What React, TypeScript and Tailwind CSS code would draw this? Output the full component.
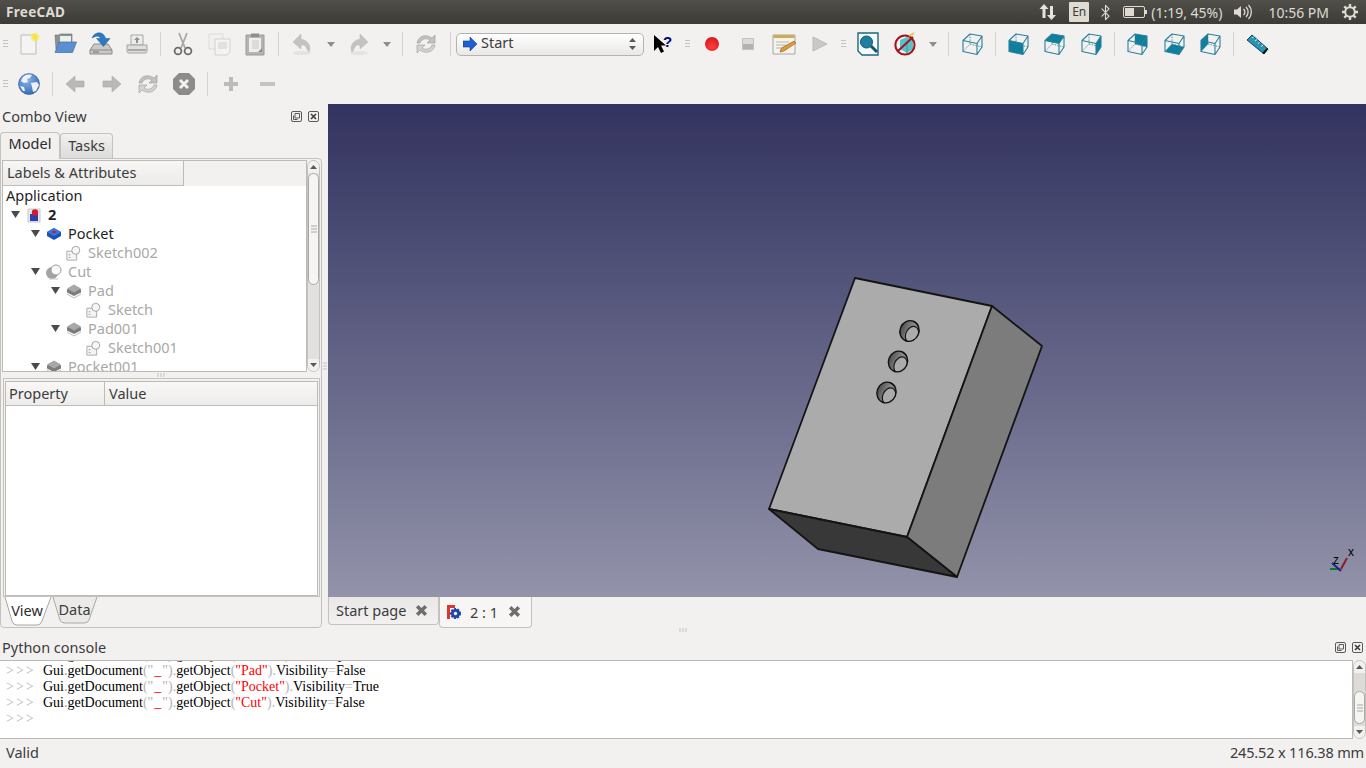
import React from "react";
import { Bluetooth } from "lucide-react";

const I = ({ children, s = 24 }: { children: React.ReactNode; s?: number }) => (
  <svg width={s} height={s} viewBox="0 0 24 24" className="block">{children}</svg>
);

const Grip = ({ w = "w-[11px]" }: { w?: string }) => (
  <div className={`${w} h-full flex items-center justify-start`}>
    <svg width="6" height="10" viewBox="0 0 6 10" className="ml-[3px] block">
      <path d="M0 1.500h5M0 4.500h5M0 7.500h5" stroke="#c4c2bf" strokeWidth="1" />
    </svg>
  </div>
);
const Sep = ({ w = "w-[10px]" }: { w?: string }) => (
  <div className={`${w} h-full flex items-center justify-center`}><div className="w-px h-6 bg-[#d6d4d1]" /></div>
);
const Btn = ({ children, w = "w-9" }: { children?: React.ReactNode; w?: string }) => (
  <div className={`${w} h-full flex items-center justify-center shrink-0`}>{children}</div>
);
const Drop = () => (
  <svg width="8" height="5" viewBox="0 0 8 5" className="block"><path d="M0 0h8L4 5z" fill="#8f8e8c" /></svg>
);

const NewDoc = () => (
  <I>
    <path d="M4 3h15v19H4z" fill="#f4f4f2" stroke="#bdbcb9" />
    <circle cx="18" cy="5" r="4.500" fill="#f5e85a" opacity=".55" />
    <circle cx="18" cy="5" r="2.600" fill="#f9e52b" />
  </I>
);
const Open = () => (
  <I>
    <path d="M2 3h4l1-1h12v9H5L3 17z" fill="#8d9094" stroke="#6b7076" strokeWidth=".6" />
    <path d="M7 4h11v6H7z" fill="#eeeeeb" />
    <path d="M6 10H23.500L19.500 20.500H2z" fill="#5b8fd0" stroke="#3f6ba6" strokeWidth=".7" />
  </I>
);
const Save = () => (
  <I>
    <path d="M5 12h14l4 6v4H1v-4z" fill="#c9c9c5" stroke="#8b8b88" />
    <path d="M1 18h22" stroke="#8b8b88" />
    <path d="M4 20h6" stroke="#6e6e6c" />
    <path d="M3 6C5 1 10 0 13 1.500c2 1 3 3 3.500 5H21l-6.500 8-7-8h4C11 4 8 3 3 6z" fill="#2f79c3" stroke="#1f5a99" strokeWidth=".5" />
  </I>
);
const Print = () => (
  <I>
    <path d="M6 3h12v10H6z" fill="#ececea" stroke="#a9a8a5" />
    <path d="M12 5l3 3h-2v3h-2V8H9z" fill="#8f8f8d" />
    <path d="M2 13h20v6q0 2-2 2H4q-2 0-2-2z" fill="#dededb" stroke="#a3a29f" />
    <path d="M3 18h18" stroke="#9a9996" strokeWidth="1.500" />
  </I>
);
const Cut = () => (
  <I>
    <path d="M8 1l6 15M16 1L10 16" stroke="#a9a8a6" strokeWidth="1.800" />
    <circle cx="7" cy="19" r="3.400" fill="none" stroke="#6d6d6b" strokeWidth="1.800" />
    <circle cx="17" cy="19" r="3.400" fill="none" stroke="#6d6d6b" strokeWidth="1.800" />
  </I>
);
const Copy = () => (
  <I>
    <path d="M2 2h14v15H2z" fill="#f1f0ee" stroke="#dcdbd8" />
    <path d="M8 7h15v13l-3 3H8z" fill="#f4f3f1" stroke="#d2d1ce" />
    <path d="M11 10h9v7h-9z" fill="#e2e1de" />
  </I>
);
const Paste = () => (
  <I>
    <path d="M3 3h18v20H3z" fill="#b5b4b1" stroke="#9b9a97" />
    <path d="M6 6h12v14H6z" fill="#efeeec" />
    <path d="M9 8h7v9H9z" fill="#dcdbd8" />
    <path d="M8 1.500h8V5H8z" fill="#8f8e8c" />
    <path d="M15 20l4-4v4z" fill="#8f8e8c" />
  </I>
);
const Undo = ({ flip = false }: { flip?: boolean }) => (
  <I>
    <g transform={flip ? "matrix(-1 0 0 1 24 0)" : undefined}>
      <ellipse cx="12" cy="21" rx="9" ry="2" fill="#e4e3e0" />
      <path d="M11 2L3 10l8 7v-4c3-.5 5 .5 6 4 .3 1 1 2 2 3 2-4 1-11-8-13z" fill="#c4c3c0" stroke="#b5b4b1" strokeWidth=".5" />
    </g>
  </I>
);
const Refresh = () => (
  <I>
    <path d="M3 11C4 6 8 3 13 4c2 0 3 1 5 2l3-3v8h-8l3-3c-3-2-8-2-10 3z" fill="#c2c1be" stroke="#a3a29f" strokeWidth=".7" />
    <path d="M21 13c-1 5-5 8-10 7-2 0-3-1-5-2l-3 3v-8h8l-3 3c3 2 8 2 10-3z" fill="#d4d3d0" stroke="#a3a29f" strokeWidth=".7" />
  </I>
);
const Globe = () => (
  <I>
    <defs>
      <radialGradient id="gl" cx=".4" cy=".3" r=".8"><stop offset="0" stopColor="#8fb6e6" /><stop offset="1" stopColor="#2a62b0" /></radialGradient>
    </defs>
    <circle cx="12" cy="12" r="10.500" fill="url(#gl)" stroke="#2b5b9e" strokeWidth=".6" />
    <path d="M6 5c3-3 7-3 9-2l-2 3-3 1 1 3-4 1-3-2zM14 11l6-1 2 3-3 6-3 1-1-5zM3 14l4 1 1 4-2 0z" fill="#eef2f8" />
  </I>
);
const Arrow = ({ flip = false }: { flip?: boolean }) => (
  <I>
    <path d={flip ? "M3 9h9V4l9 8-9 8v-5H3z" : "M20 9h-9V4l-9 8 9 8v-5h9z"} fill="#b9b8b5" stroke="#a9a8a5" strokeWidth=".6" />
  </I>
);
const StopX = () => (
  <I>
    <path d="M7 1h10l6 6v10l-6 6H7l-6-6V7z" fill="#8d8c8a" />
    <path d="M8 8l8 8M16 8l-8 8" stroke="#f2f1f0" strokeWidth="3" />
  </I>
);
const Plus = () => (
  <I>
    <path d="M10 5h4v5h5v4h-5v5h-4v-5H5v-4h5z" fill="#bcbbb8" />
  </I>
);
const Minus = () => (
  <I>
    <path d="M5 10h15v4H5z" fill="#c4c3c0" />
  </I>
);
const WhatsThis = () => (
  <svg width="20" height="20" viewBox="0 0 20 20" className="block">
    <path d="M1 1v16l4-4 3 6 3-1.500-3-6h5z" fill="#000" />
    <text x="10" y="13" fontSize="15" fontWeight="700" fill="#00007f" fontFamily="'Liberation Sans',sans-serif">?</text>
  </svg>
);
const Record = () => (
  <I>
    <defs><radialGradient id="rec" cx=".5" cy=".7" r=".7"><stop offset="0" stopColor="#ff4040" /><stop offset="1" stopColor="#d81818" /></radialGradient></defs>
    <circle cx="12" cy="12" r="7" fill="url(#rec)" />
  </I>
);
const StopM = () => (
  <I>
    <rect x="6.500" y="6.500" width="11" height="11" fill="#dcdbd8" stroke="#c4c3c0" />
    <rect x="7" y="12" width="10" height="5" fill="#b2b1ae" />
  </I>
);
const Macro = () => (
  <I>
    <path d="M1 3h22v19H1z" fill="#f4f3ee" stroke="#a9a89f" />
    <path d="M1.500 3h21v3h-21z" fill="#c9ae56" />
    <path d="M4 10h13M4 13h10M4 16h7" stroke="#b8b7af" />
    <path d="M22 9l2 2-12 8-4 1 1.500-4z" fill="#e09a3a" stroke="#8b5a1b" strokeWidth=".6" />
  </I>
);
const Play = () => (
  <I><path d="M5 5l14 7-14 7z" fill="#c9c8c5" stroke="#bbbab7" /></I>
);
const Fit = () => (
  <I>
    <path d="M2 1h20v22H6l-4-4z" fill="#f7fbfc" stroke="#1a6a84" strokeWidth="1.400" />
    <circle cx="10.500" cy="10" r="6" fill="#1f7f9f" stroke="#10566e" />
    <path d="M15 14l6 6" stroke="#10566e" strokeWidth="3" />
  </I>
);
const NoDraw = () => (
  <I>
    <path d="M7 8l7-3 6 3v9l-6 4-7-4z" fill="#59c2c9" />
    <path d="M14 11v10" stroke="#3b9aa3" />
    <circle cx="12" cy="13" r="9.600" fill="none" stroke="#a4141b" strokeWidth="2" />
    <path d="M5 19L20 5" stroke="#a4141b" strokeWidth="2" />
    <path d="M16 4l5-3" stroke="#e7c64a" strokeWidth="2" />
  </I>
);
const Cube = ({ faces = "" }: { faces?: string }) => {
  const c = "#0f7f9e";
  const st = "#2a7f9a";
  return (
    <I>
      {faces === "front" && <path d="M3 8.500l14 3v11l-14-3z" fill={c} />}
      {faces === "top" && <path d="M3 8.500l7-6.500 12 2-5 7.500z" fill={c} />}
      {faces === "right" && <path d="M17 11.500l5-7.500v11l-5 7.500z" fill={c} />}
      {faces === "rear" && <path d="M10 2l12 2v11l-12-3z" fill={c} />}
      {faces === "bottom" && <path d="M3 19.500l14 3 5-7.500-12-3z" fill={c} />}
      {faces === "left" && <path d="M3 8.500l7-6.500v10l-7 7.500z" fill={c} />}
      <path d="M3 8.500l7-6.500 12 2v11l-5 7.500-14-3zM3 8.500l14 3 5-7.500M17 11.500v11" fill="none" stroke={st} strokeWidth="1.100" strokeLinejoin="round" />
      <path d="M10 2v10l-7 7.500M10 12l12 3" fill="none" stroke={st} strokeWidth=".8" strokeDasharray="1.500 1.200" />
    </I>
  );
};
const Measure = () => (
  <I>
    <path d="M2 8l5-5 16 14-4 5z" fill="#2b93b5" stroke="#0e4a5e" strokeWidth="1" />
    <path d="M7 6l1.500-1M10 9l2-1.500M13 11.500l1.500-1M16 14.500l2-1.500" stroke="#d9eef5" strokeWidth="1" />
    <path d="M17 21l5-5 1 1-4 5z" fill="#111" />
  </I>
);

const TrayArrows = () => (
  <svg width="18" height="18" viewBox="0 0 18 18" className="block">
    <path d="M5 1l4.500 5H6.500v9h-3V6H.5z" fill="#e6e3dc" />
    <path d="M12.500 17L8 12h3V3h3v9h3z" fill="#e6e3dc" />
  </svg>
);
const Battery = () => (
  <svg width="24" height="12" viewBox="0 0 24 12" className="block">
    <rect x=".5" y=".5" width="21" height="11" rx="1.500" fill="none" stroke="#dfdbd2" />
    <rect x="2" y="2" width="9" height="8" fill="#dfdbd2" />
    <rect x="22" y="4" width="2" height="4" fill="#dfdbd2" />
  </svg>
);
const Volume = () => (
  <svg width="20" height="16" viewBox="0 0 20 16" className="block">
    <path d="M0 5.500h3L7 2v12l-4-3.500H0z" fill="#dfdbd2" />
    <path d="M9.500 5a4 4 0 0 1 0 6M12 3a7 7 0 0 1 0 10M14.500 1a10 10 0 0 1 0 14" fill="none" stroke="#dfdbd2" strokeWidth="1.300" />
  </svg>
);
const Gear = () => (
  <svg width="18" height="18" viewBox="0 0 18 18" className="block">
    <path d="M9 1v3M9 14v3M1 9h3M14 9h3M3.300 3.300l2.200 2.200M12.500 12.500l2.200 2.200M14.700 3.300l-2.200 2.200M5.500 12.500l-2.200 2.200" stroke="#dfdbd2" strokeWidth="2.400" />
    <circle cx="9" cy="9" r="4.800" fill="none" stroke="#dfdbd2" strokeWidth="2" />
  </svg>
);

const Tri = () => (
  <svg width="9" height="7" viewBox="0 0 9 7" className="block"><path d="M0 0h9L4.500 7z" fill="#4a4a4a" /></svg>
);
const DocIcon = () => (
  <svg width="16" height="16" viewBox="0 0 16 16" className="block">
    <path d="M2 2h12v13H2z" fill="#e8e8e8" stroke="#c8c8c8" />
    <path d="M4 7h8v7H4z" fill="#2c3fb0" />
    <circle cx="9" cy="5.500" r="3.200" fill="#cc1f2c" />
  </svg>
);
const PocketIcon = () => (
  <svg width="16" height="16" viewBox="0 0 16 16" className="block">
    <path d="M8 2l7 4v4l-7 4-7-4V6z" fill="#1a52b8" />
    <path d="M8 2l7 4-7 4-7-4z" fill="#2f7ae0" />
    <path d="M8 4.500l3 1.500-3 1.500-3-1.500z" fill="#c81e28" />
  </svg>
);
const SketchIcon = () => (
  <svg width="16" height="16" viewBox="0 0 18 18" className="block">
    <path d="M1 7h11v10H1z" fill="#f4f4f4" stroke="#a4a4a4" />
    <circle cx="11" cy="6" r="4.500" fill="#f6f6f6" stroke="#9c9c9c" />
    <path d="M3 11h2M3 14h2" stroke="#9c9c9c" />
  </svg>
);
const CutIcon = () => (
  <svg width="18" height="18" viewBox="0 0 18 18" className="block">
    <circle cx="7" cy="10" r="6" fill="#a4a4a4" />
    <circle cx="11" cy="7" r="5" fill="#fafafa" stroke="#9c9c9c" />
    <path d="M4 16h9" stroke="#c8c8c8" />
  </svg>
);
const PadIcon = () => (
  <svg width="16" height="16" viewBox="0 0 16 16" className="block">
    <path d="M8 3l7 3.500v3L8 13l-7-3.500v-3z" fill="#7c7c7c" />
    <path d="M8 1.500l7 4-7 4-7-4z" fill="#a8a8a8" />
    <path d="M1 11l7 4 7-4" fill="none" stroke="#bcbcbc" />
  </svg>
);

type Row = { level: number; label: string; kind: "doc" | "pocket" | "sketch" | "cut" | "pad"; dim?: boolean; bold?: boolean; arrow?: boolean };
const rows: Row[] = [
  { level: 0, label: "2", kind: "doc", bold: true, arrow: true },
  { level: 1, label: "Pocket", kind: "pocket", arrow: true },
  { level: 2, label: "Sketch002", kind: "sketch", dim: true },
  { level: 1, label: "Cut", kind: "cut", dim: true, arrow: true },
  { level: 2, label: "Pad", kind: "pad", dim: true, arrow: true },
  { level: 3, label: "Sketch", kind: "sketch", dim: true },
  { level: 2, label: "Pad001", kind: "pad", dim: true, arrow: true },
  { level: 3, label: "Sketch001", kind: "sketch", dim: true },
  { level: 1, label: "Pocket001", kind: "pad", dim: true, arrow: true },
];
const levelPad = ["pl-[8px]", "pl-[28px]", "pl-[48px]", "pl-[68px]"];
const kinds = { doc: DocIcon, pocket: PocketIcon, sketch: SketchIcon, cut: CutIcon, pad: PadIcon };

const TreeRow = ({ r }: { r: Row }) => {
  const Ico = kinds[r.kind];
  return (
    <div className={`h-[19px] shrink-0 flex items-center ${levelPad[r.level]}`}>
      <div className="w-[12px] shrink-0">{r.arrow && <Tri />}</div>
      <div className="w-[22px] shrink-0 flex justify-center"><Ico /></div>
      <span className={`ml-[3px] ${r.dim ? "text-[#a8a8a8]" : "text-[#1f1f1f]"} ${r.bold ? "font-bold" : ""}`}>{r.label}</span>
    </div>
  );
};

const Dock = () => (
  <div className="flex gap-[6px] items-center">
    <svg width="11" height="11" viewBox="0 0 11 11" className="block">
      <rect x=".5" y=".5" width="10" height="10" rx="1.500" fill="none" stroke="#5a5a5a" />
      <path d="M4 2.500h4.500v4.500H4zM2.500 4.500v4h4" fill="none" stroke="#5a5a5a" />
    </svg>
    <svg width="11" height="11" viewBox="0 0 11 11" className="block">
      <rect x=".5" y=".5" width="10" height="10" rx="1.500" fill="none" stroke="#5a5a5a" />
      <path d="M3 3l5 5M8 3l-5 5" stroke="#3c3c3c" strokeWidth="1.600" />
    </svg>
  </div>
);

const Line = ({ name, last = "False" }: { name: string; last?: string }) => (
  <div className="h-4 flex items-center whitespace-nowrap">
    <span className="w-[37px] shrink-0 text-[#b4b4b4] tracking-[2px]">&gt;&gt;&gt;</span>
    <span className="text-black">
      Gui<span className="text-[#9a9a9a]">.</span>getDocument<span className="text-[#b4b4b4]">("</span>
      <span className="text-[#ff0000] px-px">_</span>
      <span className="text-[#b4b4b4]">").</span>getObject<span className="text-[#b4b4b4]">(</span>
      <span className="text-[#ff0000]">"{name}"</span>
      <span className="text-[#b4b4b4]">).</span>Visibility<span className="text-[#b4b4b4]">=</span>{last}
    </span>
  </div>
);

const Close = () => (
  <svg width="13" height="13" viewBox="0 0 12 12" className="block">
    <path d="M2 2l8 8M10 2l-8 8" stroke="#6e6e6c" strokeWidth="3.200" />
  </svg>
);

const ArrowUp = () => <svg width="7" height="4" viewBox="0 0 7 4" className="block"><path d="M0 4l3.500-4L7 4z" fill="#5a5a5a" /></svg>;
const ArrowDown = () => <svg width="7" height="4" viewBox="0 0 7 4" className="block"><path d="M0 0l3.500 4L7 0z" fill="#5a5a5a" /></svg>;
const ThumbGrip = () => (
  <svg width="6" height="8" viewBox="0 0 6 8" className="block"><path d="M0 1h6M0 4h6M0 7h6" stroke="#a8a8a8" /></svg>
);

const Hole = ({ cx, cy }: { cx: number; cy: number }) => (
  <g transform={`translate(${cx} ${cy}) rotate(22)`}>
    <ellipse rx="9.500" ry="10.500" fill="url(#holeFill)" />
    <ellipse cx="3.800" cy="2.500" rx="6.300" ry="8.600" fill="#ababab" stroke="#111" strokeWidth="1.100" clipPath="url(#holeClip)" />
    <ellipse rx="9.500" ry="10.500" fill="none" stroke="#111" strokeWidth="1.400" />
  </g>
);

export default function App() {
  return (
    <div className="w-[1366px] h-[768px] overflow-hidden flex flex-col bg-[#f2f1f0] text-[14.500px] text-[#3c3c3c] font-['Noto_Sans',sans-serif]">
      {/* Title bar */}
      <div className="h-6 shrink-0 flex items-center bg-linear-to-b from-[#504f49] to-[#3c3b37] text-[#dfdbd2] text-[13.500px]">
        <span className="ml-[6px] font-bold tracking-[.3px]">FreeCAD</span>
        <div className="ml-auto flex items-center h-full">
          <TrayArrows />
          <div className="ml-[12px] w-5 h-5 bg-[#dfdbd2] text-[#3c3b37] text-[12px] flex items-center justify-center rounded-[1px]">En</div>
          <Bluetooth size={17} className="ml-[8px] text-[#dfdbd2]" strokeWidth={1.600} />
          <div className="ml-[9px]"><Battery /></div>
          <span className="ml-[4px] text-[14px]">(1:19, 45%)</span>
          <div className="ml-[12px]"><Volume /></div>
          <span className="ml-[14px] text-[14px]">10:56 PM</span>
          <div className="ml-[12px] mr-[7px]"><Gear /></div>
        </div>
      </div>

      {/* Toolbar row 1 */}
      <div className="h-10 shrink-0 flex items-center">
        <Grip />
        <Btn><NewDoc /></Btn>
        <Btn><Open /></Btn>
        <Btn><Save /></Btn>
        <Btn><Print /></Btn>
        <Sep />
        <Btn><Cut /></Btn>
        <Btn><Copy /></Btn>
        <Btn><Paste /></Btn>
        <Sep w="w-[11px]" />
        <Btn><Undo /></Btn>
        <Btn w="w-[21px]"><Drop /></Btn>
        <Btn><Undo flip /></Btn>
        <Btn w="w-5"><Drop /></Btn>
        <Sep w="w-[11px]" />
        <Btn><Refresh /></Btn>
        <Sep w="w-3" />
        <div className="w-[188px] h-[23px] shrink-0 rounded-[5px] border border-[#b5b3b0] bg-linear-to-b from-white to-[#e9e8e6] flex items-center pl-[6px] pr-[7px]">
          <svg width="14" height="14" viewBox="0 0 14 14" className="block"><path d="M0 4h7V0l7 7-7 7v-4H0z" fill="#1f5fd0" stroke="#123d8c" strokeWidth=".6" /></svg>
          <span className="ml-1 -mt-[2px]">Start</span>
          <div className="ml-auto flex flex-col gap-[4px]"><ArrowUp /><ArrowDown /></div>
        </div>
        <Btn w="w-[38px]"><WhatsThis /></Btn>
        <Grip w="w-[12px]" />
        <Btn><Record /></Btn>
        <Btn><StopM /></Btn>
        <Btn><Macro /></Btn>
        <Btn><Play /></Btn>
        <Grip w="w-3" />
        <Btn><Fit /></Btn>
        <Btn w="w-[37px]"><NoDraw /></Btn>
        <Btn w="w-5"><Drop /></Btn>
        <Sep w="w-[11px]" />
        <Btn><Cube /></Btn>
        <Sep />
        <Btn><Cube faces="front" /></Btn>
        <Btn><Cube faces="top" /></Btn>
        <Btn w="w-[37px]"><Cube faces="right" /></Btn>
        <Sep />
        <Btn><Cube faces="rear" /></Btn>
        <Btn w="w-[37px]"><Cube faces="bottom" /></Btn>
        <Btn><Cube faces="left" /></Btn>
        <Sep w="w-[11px]" />
        <Btn><Measure /></Btn>
      </div>

      {/* Toolbar row 2 */}
      <div className="h-10 shrink-0 flex items-center">
        <Grip />
        <Btn><Globe /></Btn>
        <Sep w="w-[11px]" />
        <Btn><Arrow /></Btn>
        <Btn><Arrow flip /></Btn>
        <Btn><Refresh /></Btn>
        <Btn><StopX /></Btn>
        <Sep w="w-[11px]" />
        <Btn><Plus /></Btn>
        <Btn><Minus /></Btn>
      </div>

      {/* Main */}
      <div className="h-[524px] shrink-0 flex">
        {/* Left dock */}
        <div className="w-[322px] shrink-0 flex flex-col">
          <div className="h-[26px] shrink-0 flex items-center justify-between pl-[2px] pr-[3px] pb-[1px]">
            <span>Combo View</span>
            <Dock />
          </div>
          <div className="h-[28px] shrink-0 flex items-end">
            <div className="w-[60px] h-[27px] -mb-px z-10 pb-[5px] rounded-t-[4px] border border-b-0 border-[#c4c2bf] bg-[#f2f1f0] flex items-center justify-center text-[#2c2c2c]">Model</div>
            <div className="w-[53px] h-[25px] rounded-t-[4px] pb-[1px] border border-b-0 border-[#c4c2bf] bg-linear-to-b from-[#f2f1f0] to-[#dedcda] flex items-center justify-center">Tasks</div>
          </div>
          <div className="h-[470px] w-[322px] shrink-0 border border-[#c4c2bf] rounded-b-[4px] rounded-tr-[4px] flex flex-col px-px pt-px">
            <div className="h-[212px] shrink-0 flex">
              <div className="w-[305px] shrink-0 bg-white border border-[#bdbbb8] overflow-hidden flex flex-col">
                <div className="h-[25px] shrink-0 flex bg-[#f2f1f0]">
                  <div className="w-[181px] border-r border-b border-[#bdbbb8] flex items-center pl-1 bg-linear-to-b from-[#f7f6f5] to-[#ecebe9]">Labels &amp; Attributes</div>
                </div>
                <div className="h-[19px] shrink-0 flex items-center pl-[3px] text-[#1f1f1f]">Application</div>
                {rows.map((r) => <TreeRow key={r.label} r={r} />)}
              </div>
              <div className="w-[13px] shrink-0 rounded-full border border-[#c4c2bf] bg-[#e2e1df] flex flex-col items-center overflow-hidden">
                <div className="h-3 shrink-0 bg-[#f2f1f0] w-full flex items-center justify-center"><ArrowUp /></div>
                <div className="h-[112px] shrink-0 w-full rounded-full border border-[#a9a8a5] bg-[#f6f5f4] flex items-center justify-center"><ThumbGrip /></div>
                <div className="flex-1" />
                <div className="h-3 shrink-0 bg-[#f2f1f0] w-full flex items-center justify-center"><ArrowDown /></div>
              </div>
            </div>
            <div className="h-[6px] shrink-0 flex items-center justify-center">
              <svg width="9" height="4" viewBox="0 0 9 4" className="block"><path d="M1 0v4M4 0v4M7 0v4" stroke="#c4c2bf" /></svg>
            </div>
            <div className="h-[219px] ml-px shrink-0 border border-[#c4c2bf] pt-[2px] px-px pb-0">
              <div className="h-full bg-white border border-[#bdbbb8] flex flex-col">
                <div className="h-[24px] shrink-0 flex bg-linear-to-b from-[#f9f8f7] to-[#edecea] border-b border-[#bdbbb8]">
                  <div className="w-[99px] border-r border-[#bdbbb8] flex items-center pl-[3px]">Property</div>
                  <div className="flex-1 flex items-center pl-1">Value</div>
                </div>
              </div>
            </div>
            <div className="h-[30px] shrink-0 flex pl-[2px]">
              <div className="relative w-[48px] h-full flex items-center justify-center">
                <svg width="48" height="30" viewBox="0 0 48 30" className="absolute inset-0 block">
                  <path d="M1 0L8 24Q9 28 13 28H33Q37 28 38 24L47 0" fill="#fff" stroke="#a9a8a5" />
                </svg>
                <span className="relative -mt-[3px] -ml-[2px] text-[#2c2c2c]">View</span>
              </div>
              <div className="relative -ml-[2px] w-[50px] h-full flex items-center justify-center">
                <svg width="50" height="30" viewBox="0 0 50 30" className="absolute inset-0 block">
                  <path d="M3 0L10 23Q11 26 15 26H34Q38 26 39 23L47 0" fill="#eceae8" stroke="#a9a8a5" />
                </svg>
                <span className="relative -mt-[5px] -ml-[1px]">Data</span>
              </div>
            </div>
          </div>
        </div>
        {/* Splitter */}
        <div className="w-[6px] shrink-0 flex items-center justify-center">
          <svg width="4" height="9" viewBox="0 0 4 9" className="block"><path d="M0 1h4M0 4h4M0 7h4" stroke="#c4c2bf" /></svg>
        </div>
        {/* Viewport */}
        <div className="flex-1 flex flex-col min-w-0">
          <div className="relative h-[493px] shrink-0 bg-linear-to-b from-[#33335f] to-[#9393aa]">
            <svg width="1038" height="493" viewBox="328 104 1038 493" className="block">
              <defs>
                <linearGradient id="holeFill" x1="0" y1="0" x2="1" y2="0">
                  <stop offset="0" stopColor="#4e4e4e" />
                  <stop offset=".6" stopColor="#8c8c8c" />
                  <stop offset="1" stopColor="#6a6a6a" />
                </linearGradient>
                <clipPath id="holeClip">
                  <ellipse rx="9.500" ry="10.500" />
                </clipPath>
              </defs>
              <g stroke="#141414" strokeWidth="1.800" strokeLinejoin="round">
                <path d="M855 278L992 306 907 537 769 509z" fill="#ababab" />
                <path d="M992 306L1042 346 957 577 907 537z" fill="#7c7c7c" />
                <path d="M769 509L907 537 957 577 818 549z" fill="#383838" />
              </g>
              <Hole cx={909.500} cy={331} />
              <Hole cx={898} cy={361.500} />
              <Hole cx={886.500} cy={392.500} />
              <g strokeWidth="2" fill="none">
                <path d="M1341 569L1347 558" stroke="#8c1f1f" />
                <path d="M1330 569H1340" stroke="#0f7a1f" />
                <path d="M1332 563L1341 571" stroke="#1f1f9c" />
              </g>
              <text x="1348" y="556" fontSize="12" fill="#000" fontFamily="'Liberation Sans',sans-serif">x</text>
              <text x="1333" y="564" fontSize="12" fill="#000" fontFamily="'Liberation Sans',sans-serif">z</text>
            </svg>
          </div>
          <div className="h-[31px] shrink-0 flex items-start">
            <div className="w-[111px] h-[28px] rounded-b-[4px] border border-t-0 border-[#c4c2bf] bg-linear-to-b from-[#e9e8e6] to-[#f2f1f0] flex items-center pl-[7px]">
              <span className="mt-[1px]">Start page</span>
              <div className="ml-[9px]"><Close /></div>
            </div>
            <div className="w-[93px] h-[31px] rounded-b-[4px] border border-t-0 border-[#c4c2bf] bg-[#f7f6f5] flex items-center pl-[6px] pb-[1px]">
              <svg width="16" height="16" viewBox="0 0 16 16" className="block">
                <path d="M1 1h8v3H4v11H1z" fill="#e0352b" />
                <circle cx="9.500" cy="9.500" r="4.500" fill="#2146a8" stroke="#2146a8" strokeDasharray="2 1.200" strokeWidth="2" />
                <circle cx="9.500" cy="9.500" r="1.700" fill="#f7f6f5" />
              </svg>
              <span className="ml-[8px] mt-[2px]">2 : 1</span>
              <div className="ml-[10px]"><Close /></div>
            </div>
          </div>
        </div>
      </div>

      {/* Splitter */}
      <div className="h-[12px] shrink-0 relative flex justify-center items-start pl-[1px]">
        <svg width="9" height="4" viewBox="0 0 9 4" className="block"><path d="M1 0v4M4 0v4M7 0v4" stroke="#c4c2bf" /></svg>
      </div>

      {/* Python console */}
      <div className="h-[20px] shrink-0 flex items-center justify-between pl-[2px] pr-[3px] pb-[6px]">
        <span className="mt-[2px]">Python console</span>
        <Dock />
      </div>
      <div className="h-[79px] shrink-0 flex">
        <div className="w-[1353px] shrink-0 bg-white border border-[#bdbbb8] border-l-0 overflow-hidden pl-[6px] font-['Liberation_Serif',serif] text-[14px]">
          <div className="-mt-[15px]">
            <Line name="Sketch" />
            <Line name="Pad" />
            <Line name="Pocket" last="True" />
            <Line name="Cut" />
            <div className="h-4 flex items-center text-[#b4b4b4] tracking-[2px]">&gt;&gt;&gt;</div>
          </div>
        </div>
        <div className="w-[13px] shrink-0 rounded-full border border-[#c4c2bf] bg-[#dcdbd9] flex flex-col items-center overflow-hidden">
          <div className="h-3 shrink-0 bg-[#f2f1f0] w-full flex items-center justify-center"><ArrowUp /></div>
          <div className="h-[18px] shrink-0" />
          <div className="h-[33px] shrink-0 w-full rounded-full border border-[#a9a8a5] bg-[#f6f5f4] flex items-center justify-center"><ThumbGrip /></div>
          <div className="flex-1" />
          <div className="h-3 shrink-0 bg-[#f2f1f0] w-full flex items-center justify-center"><ArrowDown /></div>
        </div>
      </div>

      {/* Status bar */}
      <div className="flex-1 flex items-center justify-between px-[6px] pr-[2px] pb-[1px]">
        <span>Valid</span>
        <span className="tracking-[-.15px]">245.52 x 116.38 mm</span>
      </div>
    </div>
  );
}
